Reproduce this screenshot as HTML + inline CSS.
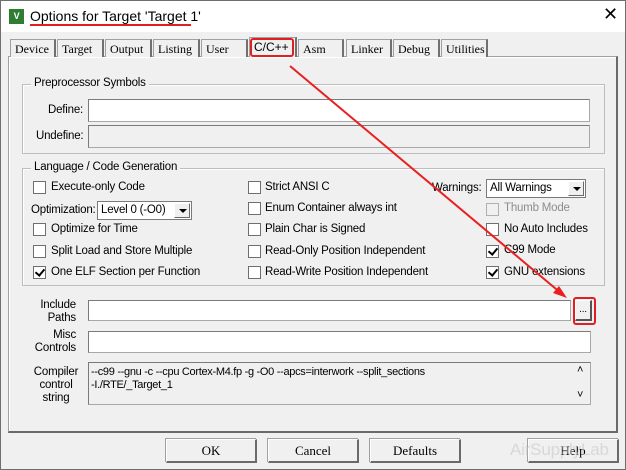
<!DOCTYPE html>
<html><head><style>
*{margin:0;padding:0;box-sizing:border-box}
body{width:626px;height:470px;background:#f0f0f0;font-family:"Liberation Sans",sans-serif;font-size:11.5px;letter-spacing:-0.2px;color:#000;position:relative;overflow:hidden}
.a{position:absolute}
.win{left:0;top:0;width:626px;height:470px;border:1px solid #6e6e6e}
.tab{position:absolute;top:39px;height:18px;border:1px solid #a0a0a0;border-bottom:none;border-right:2px solid #707070;background:#f0f0f0;font-family:"Liberation Serif",serif;font-size:12px;letter-spacing:0;padding:2px 0 0 4px}
.grp{position:absolute;border:1px solid #bdbdbd;box-shadow:1px 1px 0 #fff inset}
.gt{position:absolute;background:#f0f0f0;padding:0 3px;top:-8px;left:8px}
.in{position:absolute;background:#fff;border:1px solid #a8a8a8;border-top-color:#7a7a7a;border-left-color:#7a7a7a}
.cb{position:absolute;width:13px;height:13px;background:#fff;border:1px solid #6f6f6f}
.cb.ck::after{content:"";position:absolute;left:3px;top:0px;width:4px;height:7px;border:solid #000;border-width:0 2px 2px 0;transform:rotate(40deg)}
.lb{position:absolute;white-space:nowrap}
.btn{position:absolute;top:439px;width:91px;height:24px;border:1px solid #fff;border-right:2px solid #6a6a6a;border-bottom:2px solid #6a6a6a;font-family:"Liberation Serif",serif;font-size:13px;letter-spacing:0;text-align:center;line-height:21px;box-shadow:-1px -1px 0 #a0a0a0}
.sel{position:absolute;background:#fff;border:1px solid #7a7a7a;height:19px;padding:2px 0 0 3px}
.dd{position:absolute;right:1px;top:1px;width:16px;height:15px;background:#f0f0f0;border:1px solid #fff;border-right-color:#6a6a6a;border-bottom-color:#6a6a6a}
.dd::after{content:"";position:absolute;left:4px;top:5px;border:4px solid transparent;border-top:4px solid #000;border-bottom:0}
</style></head><body>
<div class="a win"></div>
<div class="a" style="left:1px;top:1px;width:624px;height:31px;background:#fff"></div>
<div class="a" style="left:9px;top:9px;width:15px;height:15px;background:#2f7d32;color:#fff;font-size:9px;font-weight:bold;text-align:center;line-height:15px">V</div>
<div class="lb" style="left:30px;top:8px;font-size:14px;letter-spacing:0">Options for Target 'Target 1'</div>
<div class="a" style="left:30px;top:24px;width:161px;height:2px;background:#e02020"></div>
<div class="lb" style="left:603px;top:4px;font-size:18px;font-weight:300">✕</div>

<div class="a" style="left:8px;top:56px;width:610px;height:377px;border:1px solid #a0a0a0;border-right:2px solid #6a6a6a;border-bottom:2px solid #6a6a6a;box-shadow:1px 1px 0 #fff inset"></div>
<div class="tab" style="left:10px;width:46px">Device</div>
<div class="tab" style="left:57px;width:47px">Target</div>
<div class="tab" style="left:105px;width:47px">Output</div>
<div class="tab" style="left:153px;width:47px">Listing</div>
<div class="tab" style="left:201px;width:47px">User</div>
<div class="tab" style="left:249px;top:37px;height:20px;width:48px;font-family:'Liberation Sans',sans-serif;border-bottom:none;background:#f0f0f0;z-index:2">C/C++</div>
<div class="tab" style="left:298px;width:46px">Asm</div>
<div class="tab" style="left:346px;width:46px">Linker</div>
<div class="tab" style="left:393px;width:47px">Debug</div>
<div class="tab" style="left:441px;width:47px">Utilities</div>
<div class="a" style="left:250px;top:38px;width:44px;height:19px;border:2px solid #e02020;border-radius:3px;z-index:3"></div>

<div class="grp" style="left:22px;top:84px;width:583px;height:70px"><span class="gt">Preprocessor Symbols</span></div>
<div class="lb" style="left:48px;top:104px">Define:</div>
<div class="in" style="left:88px;top:99px;width:502px;height:23px"></div>
<div class="lb" style="left:36px;top:130px">Undefine:</div>
<div class="in" style="left:88px;top:125px;width:502px;height:23px;background:#f0f0f0"></div>

<div class="grp" style="left:22px;top:168px;width:583px;height:118px"><span class="gt">Language / Code Generation</span></div>
<div class="cb" style="left:33px;top:181px"></div><div class="lb" style="left:51px;top:181px">Execute-only Code</div>
<div class="lb" style="left:31px;top:204px">Optimization:</div>
<div class="sel" style="left:97px;top:201px;width:95px">Level 0 (-O0)<div class="dd"></div></div>
<div class="cb" style="left:33px;top:223px"></div><div class="lb" style="left:51px;top:223px">Optimize for Time</div>
<div class="cb" style="left:33px;top:245px"></div><div class="lb" style="left:51px;top:245px">Split Load and Store Multiple</div>
<div class="cb ck" style="left:33px;top:266px"></div><div class="lb" style="left:51px;top:266px">One ELF Section per Function</div>

<div class="cb" style="left:248px;top:181px"></div><div class="lb" style="left:265px;top:181px">Strict ANSI C</div>
<div class="cb" style="left:248px;top:202px"></div><div class="lb" style="left:265px;top:202px">Enum Container always int</div>
<div class="cb" style="left:248px;top:223px"></div><div class="lb" style="left:265px;top:223px">Plain Char is Signed</div>
<div class="cb" style="left:248px;top:245px"></div><div class="lb" style="left:265px;top:245px">Read-Only Position Independent</div>
<div class="cb" style="left:248px;top:266px"></div><div class="lb" style="left:265px;top:266px">Read-Write Position Independent</div>

<div class="lb" style="left:432px;top:182px">Warnings:</div>
<div class="sel" style="left:486px;top:179px;width:100px">All Warnings<div class="dd"></div></div>
<div class="cb" style="left:486px;top:203px;background:#f0f0f0;border-color:#b0b0b0"></div><div class="lb" style="left:504px;top:202px;color:#8d8d8d">Thumb Mode</div>
<div class="cb" style="left:486px;top:223px"></div><div class="lb" style="left:504px;top:223px">No Auto Includes</div>
<div class="cb ck" style="left:486px;top:245px"></div><div class="lb" style="left:504px;top:244px">C99 Mode</div>
<div class="cb ck" style="left:486px;top:266px"></div><div class="lb" style="left:504px;top:266px">GNU extensions</div>

<div class="lb" style="left:36px;top:299px;text-align:right;width:40px;line-height:13px">Include<br>Paths</div>
<div class="in" style="left:88px;top:300px;width:483px;height:21px"></div>
<div class="a" style="left:575px;top:300px;width:17px;height:21px;border:1px solid #fff;border-right:2px solid #555;border-bottom:2px solid #555;text-align:center;font-size:10px;line-height:18px">...</div>
<div class="a" style="left:573px;top:297px;width:23px;height:28px;border:2px solid #e02020;border-radius:3px"></div>
<div class="lb" style="left:26px;top:329px;text-align:right;width:50px;line-height:13px">Misc<br>Controls</div>
<div class="lb" style="left:30px;top:366px;text-align:center;width:52px;line-height:13px">Compiler<br>control<br>string</div>
<div class="in" style="left:88px;top:331px;width:503px;height:22px"></div>
<div class="in" style="left:88px;top:362px;width:503px;height:43px;background:#f0f0f0;padding:3px 0 0 2px;line-height:13px;font-size:11px;letter-spacing:-0.3px">--c99 --gnu -c --cpu Cortex-M4.fp -g -O0 --apcs=interwork --split_sections<br>-I./RTE/_Target_1</div>
<div class="lb" style="left:577px;top:364px;font-size:11px">˄</div>
<div class="lb" style="left:577px;top:389px;font-size:11px">˅</div>

<div class="btn" style="left:166px">OK</div>
<div class="btn" style="left:268px">Cancel</div>
<div class="btn" style="left:370px">Defaults</div>
<div class="btn" style="left:528px">Help</div>
<div class="lb" style="left:510px;top:440px;font-size:17px;color:rgba(200,200,200,0.6)">AirSupplyLab</div>

<svg class="a" style="left:0;top:0" width="626" height="470">
<line x1="290" y1="66" x2="562" y2="294" stroke="#e82020" stroke-width="2"/>
<polygon points="567,298 553,293 559,286" fill="#e82020"/>
</svg>
</body></html>
